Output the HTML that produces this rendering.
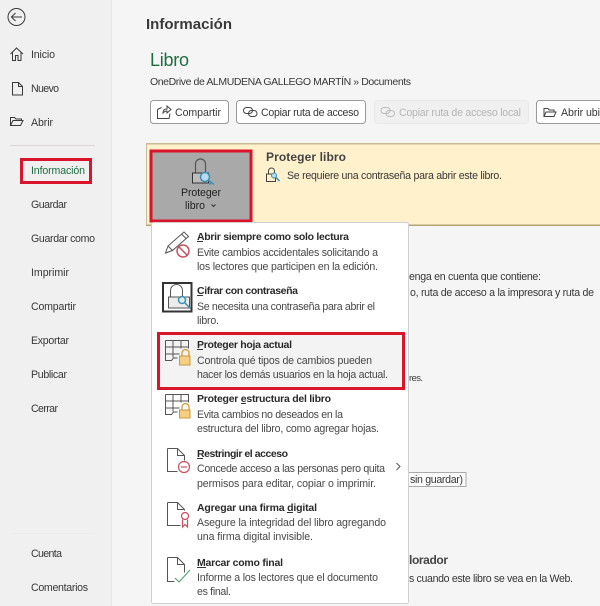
<!DOCTYPE html>
<html lang="es"><head><meta charset="utf-8"><title>Información</title>
<style>
html,body{margin:0;padding:0;background:#f5f5f5}
svg{display:block}
text{font-family:"Liberation Sans",sans-serif;font-size:10.6px;fill:#383838}
.t{font-weight:bold;fill:#2a2a2a;font-size:10.5px}
.d{fill:#484848}
</style></head><body>
<svg width="600" height="606" viewBox="0 0 600 606" xmlns="http://www.w3.org/2000/svg">
<rect width="600" height="606" fill="#f5f5f5"/>
<rect width="111" height="606" fill="#f0f0f0"/>
<rect x="111" width="1" height="606" fill="#e6e6e6"/>
<rect x="10" y="145" width="85" height="1" fill="#d8d5d2"/>
<rect x="10" y="533" width="85" height="1" fill="#ececec"/>

<!-- sidebar icons -->
<g fill="none" stroke="#3a3a3a" stroke-width="1">
<circle cx="16.500" cy="17" r="8.500"/><path d="M11.500 17H22M15.500 13l-4 4 4 4"/>
<path d="M10.500 54l6-6 6.500 6M12.500 52.500v8h3v-5h2.500v5h3v-8"/>
<path d="M12.500 82.500h6l4 4v8.500h-10zM18.500 82.500v4h4"/>
<path d="M10.500 125.500v-8h4l1.500 1.500h5.500v2M10.500 125.500l2.500-5h10l-2.500 5z"/>
</g>
<text x="31" y="58" textLength="24">Inicio</text>
<text x="31" y="92" textLength="28">Nuevo</text>
<text x="31" y="126" textLength="22">Abrir</text>
<text x="31" y="174" textLength="54" style="fill:#1f6e43">Información</text>
<rect x="21.500" y="159.500" width="69" height="23" fill="none" stroke="#d9142b" stroke-width="3"/>
<text x="31" y="208" textLength="36">Guardar</text>
<text x="31" y="242" textLength="64">Guardar como</text>
<text x="31" y="276" textLength="38">Imprimir</text>
<text x="31" y="310" textLength="45">Compartir</text>
<text x="31" y="344" textLength="38">Exportar</text>
<text x="31" y="378" textLength="36">Publicar</text>
<text x="31" y="412" textLength="27">Cerrar</text>
<text x="31" y="557" textLength="31">Cuenta</text>
<text x="31" y="591" textLength="57">Comentarios</text>

<!-- heading -->
<text x="146" y="29" textLength="86" style="font-size:15px;font-weight:bold;fill:#3a3a3a">Información</text>
<text x="150" y="66" textLength="39" style="font-size:18px;fill:#1f6e43">Libro</text>
<text x="150" y="85" textLength="261" style="font-size:10.500px">OneDrive de ALMUDENA GALLEGO MARTÍN » Documents</text>

<!-- buttons -->
<rect x="150.500" y="100.500" width="78" height="23" rx="3" fill="#fff" stroke="#9a9a9a"/>
<rect x="236.500" y="100.500" width="129" height="23" rx="3" fill="#fff" stroke="#9a9a9a"/>
<rect x="374.500" y="100.500" width="154" height="23" rx="3" fill="#f0f0f0" stroke="#e8e8e8"/>
<rect x="536.500" y="100.500" width="80" height="23" rx="3" fill="#fff" stroke="#9a9a9a"/>
<g fill="none" stroke="#444">
<path d="M157.500 109.500v9h11.500l1-5M157.500 109.500l4-2M163 113c0-3 2-4 4-4v-3l4 3.500-4 3.500v-2c-2 0-3 1-4 2z"/>
<rect x="243.500" y="107.500" width="9" height="6" rx="3"/><rect x="248.500" y="110.500" width="8.500" height="6" rx="3"/>
<path d="M544 116.500v-8h4l1 1.500h5v2M544 116.500l2-4.500h10l-2 4.500z"/>
</g>
<g fill="none" stroke="#bbb"><rect x="381" y="107.500" width="9" height="6" rx="3"/><rect x="386" y="110.500" width="8.500" height="6" rx="3"/></g>
<text x="175" y="116" textLength="46">Compartir</text>
<text x="261" y="116" textLength="98">Copiar ruta de acceso</text>
<text x="399" y="116" textLength="122" style="fill:#b5b5b5">Copiar ruta de acceso local</text>
<text x="561" y="116" textLength="39">Abrir ubi</text>

<!-- banner -->
<rect x="146.500" y="143" width="460" height="82" rx="3" fill="#fef1cc"/>
<rect x="146" y="143" width="454" height="1.500" fill="#c9bc92"/>
<rect x="146" y="224.500" width="454" height="1.500" fill="#b5a678"/>
<rect x="146" y="143" width="1" height="82" fill="#c9bc92"/>

<rect x="151" y="151" width="100" height="70" fill="#a9a9a9" stroke="#d9142b" stroke-width="3"/>
<g>
<path d="M195.500 173v-9a5 5 0 0 1 10 0v9" fill="none" stroke="#555" stroke-width="1.200"/>
<rect x="192.500" y="173" width="16" height="10" fill="#bdbdbd" stroke="#333"/>
<circle cx="205" cy="177" r="4.500" fill="#b7dcee" stroke="#3f8db5" stroke-width="1.500"/>
<path d="M208 180l6 4.500M211 182.500l-1.500 2" stroke="#3f8db5" stroke-width="1.500" fill="none"/>
</g>
<text x="181" y="196" textLength="40" style="fill:#222">Proteger</text>
<text x="185" y="209" textLength="20" style="fill:#222">libro</text>
<path d="M211.500 204.500l2 2 2-2" fill="none" stroke="#333"/>
<text x="266" y="161" textLength="80" style="font-weight:bold;font-size:12px;fill:#444">Proteger libro</text>
<g>
<path d="M268.500 174v-3a3 3 0 0 1 6 0v3" fill="none" stroke="#444"/>
<rect x="266.500" y="174" width="9" height="7.500" fill="#fef1cc" stroke="#444"/>
<circle cx="274" cy="175.500" r="2.500" fill="#b7dcee" stroke="#3f8db5"/>
<path d="M276 177.500l3.500 3.500" stroke="#3f8db5" stroke-width="1.500"/>
</g>
<text x="287" y="179" textLength="215">Se requiere una contraseña para abrir este libro.</text>

<!-- behind menu text -->
<text x="409" y="280" textLength="132">enga en cuenta que contiene:</text>
<text x="410" y="296" textLength="184">o, ruta de acceso a la impresora y ruta de</text>
<text x="409" y="381" textLength="14" style="font-size:9.500px">res.</text>
<rect x="405" y="472.500" width="61" height="14" fill="#fbfbfb" stroke="#aaa"/>
<text x="410" y="483" textLength="53">sin guardar)</text>
<text x="409" y="564" textLength="39" style="font-weight:bold;font-size:12px;fill:#444">lorador</text>
<text x="409" y="582" textLength="164">s cuando este libro se vea en la Web.</text>

<!-- menu -->
<rect x="151.500" y="222.500" width="257" height="381" rx="2" fill="#fff" stroke="#cfcfcf"/>
<rect x="158.500" y="333.500" width="245" height="55" fill="#f3f3f3" stroke="#d9142b" stroke-width="3"/>

<!-- menu icons -->
<g fill="none" stroke="#555">
<path d="M165.500 253l2.500-7 16-14 4.500 4.500-16 14zM168 246l4.500 4.500M181.500 234l4.500 4.500"/>
<circle cx="183" cy="251" r="6" stroke="#c8505a" stroke-width="1.500"/><path d="M179 247l8 8" stroke="#c8505a" stroke-width="1.500"/>
<rect x="163" y="283" width="28.500" height="28.500" stroke="#333" stroke-width="2" fill="#fff"/>
<path d="M170.500 297v-6.500a6 6 0 0 1 12 0v6.500"/>
<rect x="168.500" y="297" width="21" height="11" fill="#ececec"/>
<circle cx="182" cy="300" r="3.500" stroke="#3f8db5" stroke-width="1.500" fill="#d8edf7"/><path d="M184.500 302.500l6 6" stroke="#3f8db5" stroke-width="1.500"/>
<!-- sheets -->
<path d="M165.500 340.500h23v8M165.500 340.500v20h6l2-2.500h4M165.500 347h23M165.500 354h14M173 340.500v17M181 340.500v8"/>
<path d="M165.500 394.500h23v8M165.500 394.500v20h6l2-2.500h4M165.500 401h23M165.500 408h14M173 394.500v17M181 394.500v8"/>
<!-- docs -->
<path d="M167.500 448.500h10l7 7v5M167.500 448.500v23h10M177.500 448.500v7h7"/>
<path d="M167.500 502.500h10l7 7v1M167.500 502.500v23h13M177.500 502.500v7h7"/>
<path d="M167.500 557.500h10l7 7v8M167.500 557.500v24h7M177.500 557.500v7h7"/>
</g>
<g>
<path d="M182 356v-3a3.500 3.500 0 0 1 7 0v3" fill="none" stroke="#d09a3e" stroke-width="1.300"/>
<rect x="179.500" y="356" width="10.500" height="9" fill="#f7cf83" stroke="#c89a3c"/>
<path d="M182 410v-3a3.500 3.500 0 0 1 7 0v3" fill="none" stroke="#d09a3e" stroke-width="1.300"/>
<rect x="179.500" y="410" width="10.500" height="8" fill="#f7cf83" stroke="#c89a3c"/>
</g>
<g fill="none" stroke="#c8505a" stroke-width="1.200">
<circle cx="184" cy="467" r="5.500"/><path d="M181 467h6"/>
<circle cx="185" cy="516" r="3.500"/><path d="M182.500 519.500v7.500l2.500-2.500 2.500 2.500v-7.500"/>
</g>
<path d="M175 578l4 4 11-12" fill="none" stroke="#4d9e6e" stroke-width="1"/>
<path d="M396.500 463l3.500 3.500-3.500 3.500" fill="none" stroke="#555"/>

<!-- menu text -->
<text class="t" x="197" y="240" textLength="152">Abrir siempre como solo lectura</text>
<rect x="197" y="241" width="6" height="1" fill="#333"/>
<text class="d" x="197" y="256" textLength="181">Evite cambios accidentales solicitando a</text>
<text class="d" x="197" y="270" textLength="181">los lectores que participen en la edición.</text>
<text class="t" x="197" y="294" textLength="101">Cifrar con contraseña</text>
<rect x="197" y="295" width="6" height="1" fill="#333"/>
<text class="d" x="197" y="310" textLength="178">Se necesita una contraseña para abrir el</text>
<text class="d" x="197" y="324" textLength="22">libro.</text>
<text class="t" x="197" y="348" textLength="95">Proteger hoja actual</text>
<rect x="197" y="349" width="6" height="1" fill="#333"/>
<text class="d" x="197" y="364" textLength="175">Controla qué tipos de cambios pueden</text>
<text class="d" x="197" y="378" textLength="191">hacer los demás usuarios en la hoja actual.</text>
<text class="t" x="197" y="402" textLength="134">Proteger estructura del libro</text>
<rect x="241" y="403" width="5" height="1" fill="#333"/>
<text class="d" x="197" y="418" textLength="146">Evita cambios no deseados en la</text>
<text class="d" x="197" y="432" textLength="182">estructura del libro, como agregar hojas.</text>
<text class="t" x="197" y="457" textLength="91">Restringir el acceso</text>
<rect x="197" y="458" width="6" height="1" fill="#333"/>
<text class="d" x="197" y="472" textLength="188">Concede acceso a las personas pero quita</text>
<text class="d" x="197" y="487" textLength="179">permisos para editar, copiar o imprimir.</text>
<text class="t" x="197" y="511" textLength="120">Agregar una firma digital</text>
<rect x="287" y="512" width="6" height="1" fill="#333"/>
<text class="d" x="197" y="526" textLength="189">Asegure la integridad del libro agregando</text>
<text class="d" x="197" y="540" textLength="116">una firma digital invisible.</text>
<text class="t" x="197" y="566" textLength="86">Marcar como final</text>
<rect x="197" y="567" width="9" height="1" fill="#333"/>
<text class="d" x="197" y="581" textLength="181">Informe a los lectores que el documento</text>
<text class="d" x="197" y="595" textLength="34">es final.</text>
</svg>
</body></html>
